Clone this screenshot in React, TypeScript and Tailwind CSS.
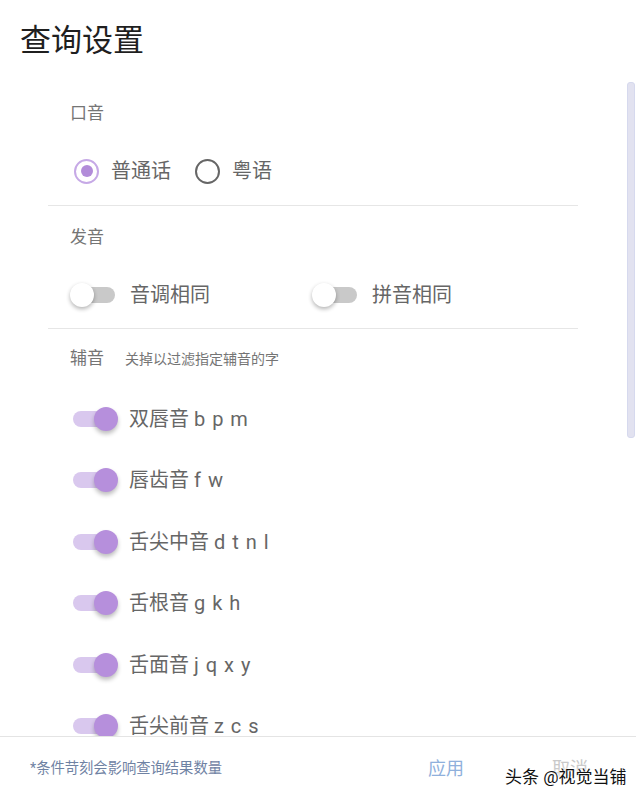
import React, { useState } from "react";

const font = "font-['Roboto','Noto_Sans_CJK_SC',sans-serif]";

type TSwitch = { on: boolean; onClick: () => void };

function Switch({ on, onClick }: TSwitch) {
  return (
    <button onClick={onClick} className="relative w-[48px] h-[26px] shrink-0">
      <span
        className={
          on
            ? "absolute left-[3px] top-[5px] w-[42px] h-[16px] rounded-full bg-[#d9c8ee]"
            : "absolute left-[3px] top-[5px] w-[42px] h-[16px] rounded-full bg-[#c9c9c9]"
        }
      />
      <span
        className={
          on
            ? "absolute right-0 top-[1px] w-[24px] h-[24px] rounded-full bg-[#b68fdc] shadow-[0_3px_4px_rgba(0,0,0,0.25)]"
            : "absolute left-0 top-[1px] w-[24px] h-[24px] rounded-full bg-white shadow-[0_2px_4px_rgba(0,0,0,0.3)]"
        }
      />
    </button>
  );
}

function Radio({ checked, label, onClick }: { checked: boolean; label: string; onClick: () => void }) {
  return (
    <button onClick={onClick} className="flex items-center">
      <span
        className={
          checked
            ? "w-[25px] h-[25px] rounded-full border-2 border-[#c6a9e6] flex items-center justify-center"
            : "w-[25px] h-[25px] rounded-full border-2 border-[#666666] flex items-center justify-center"
        }
      >
        {checked && <span className="w-[12px] h-[12px] rounded-full bg-[#b28cd9]" />}
      </span>
      <span className="ml-[12px] text-[20px] text-[#666666]">{label}</span>
    </button>
  );
}

const consonants = [
  { name: "双唇音", letters: "b p m" },
  { name: "唇齿音", letters: "f w" },
  { name: "舌尖中音", letters: "d t n l" },
  { name: "舌根音", letters: "g k h" },
  { name: "舌面音", letters: "j q x y" },
  { name: "舌尖前音", letters: "z c s" },
];

export default function App() {
  const [accent, setAccent] = useState(0);
  const [tone, setTone] = useState(false);
  const [pinyin, setPinyin] = useState(false);
  const [cons, setCons] = useState(consonants.map(() => true));

  return (
    <div className={`relative w-[636px] h-[800px] bg-white flex flex-col overflow-hidden ${font}`}>
      {/* header */}
      <div className="h-[80px] shrink-0 pl-[20px] pt-[21px]">
        <h1 className="text-[31px] leading-[40px] text-[#1f1f1f]">查询设置</h1>
      </div>

      {/* scroll area */}
      <div className="flex-1 flex overflow-hidden">
        <div className="w-[530px] ml-[48px] shrink-0">
          <section className="pt-[21px] pb-[14px] border-b border-[#e6e6e6]">
            <div className="pl-[22px] text-[17px] leading-[24px] text-[#757575]">口音</div>
            <div className="mt-[26px] h-[40px] pl-[26px] flex items-center gap-[24px]">
              <Radio checked={accent === 0} label="普通话" onClick={() => setAccent(0)} />
              <Radio checked={accent === 1} label="粤语" onClick={() => setAccent(1)} />
            </div>
          </section>

          <section className="pt-[19px] pb-[13px] border-b border-[#e6e6e6]">
            <div className="pl-[22px] text-[17px] leading-[24px] text-[#757575]">发音</div>
            <div className="mt-[26px] h-[40px] pl-[22px] flex items-center">
              <div className="w-[242px] flex items-center">
                <Switch on={tone} onClick={() => setTone(!tone)} />
                <span className="ml-[12px] text-[20px] text-[#666666]">音调相同</span>
              </div>
              <div className="flex items-center">
                <Switch on={pinyin} onClick={() => setPinyin(!pinyin)} />
                <span className="ml-[12px] text-[20px] text-[#666666]">拼音相同</span>
              </div>
            </div>
          </section>

          <section className="pt-[17px]">
            <div className="pl-[22px] flex items-baseline">
              <span className="text-[17px] leading-[24px] text-[#757575]">辅音</span>
              <span className="ml-[21px] text-[14px] text-[#757575]">关掉以过滤指定辅音的字</span>
            </div>
            <div className="mt-[18px] flex flex-col">
              {consonants.map((c, i) => (
                <div key={c.name} className="h-[61.5px] shrink-0 pl-[22px] flex items-center">
                  <Switch
                    on={cons[i]}
                    onClick={() => setCons(cons.map((v, j) => (j === i ? !v : v)))}
                  />
                  <span className="ml-[11px] text-[20px] text-[#666666]">
                    {c.name} <span className="tracking-[1px]">{c.letters}</span>
                  </span>
                </div>
              ))}
            </div>
          </section>
        </div>

        <div className="ml-[49px] mt-[2px] w-[8px] h-[356px] rounded-[3px] bg-[#e2e2f0] border border-[#d6d9ee]" />
      </div>

      {/* footer */}
      <div className="h-[64px] shrink-0 border-t border-[#e4e4e4] flex items-center pl-[30px]">
        <span className="text-[14.3px] text-[#6f82a3]">*条件苛刻会影响查询结果数量</span>
        <span className="ml-[206px] text-[18px] text-[#8fb0dc]">应用</span>
        <span className="ml-[88px] text-[18px] text-[#c9c9c9]">取消</span>
      </div>

      {/* watermark */}
      <div className="absolute left-[505px] top-[764px] text-[17px] leading-[26px] text-[#111111] [text-shadow:0_0_2px_#fff,0_0_3px_#fff,0_0_4px_#fff]">
        头条 @视觉当铺
      </div>
    </div>
  );
}
